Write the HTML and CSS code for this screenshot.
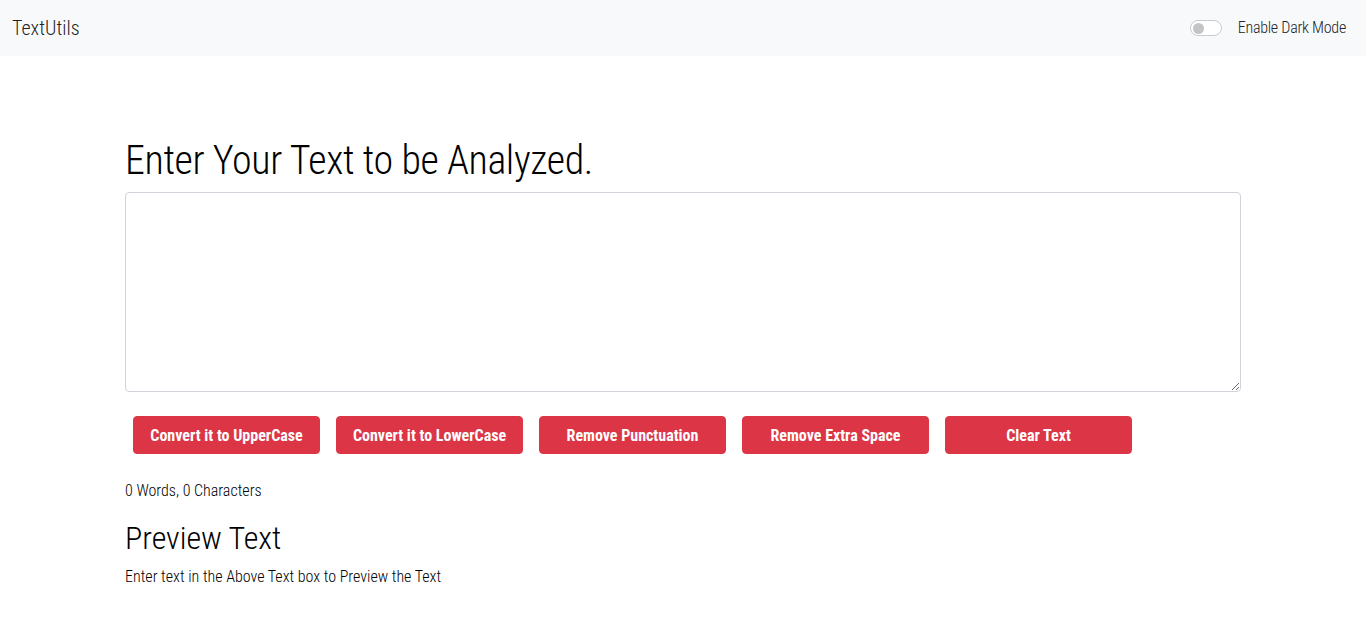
FILE: index.html
```html
<!DOCTYPE html>
<html lang="en">
<head>
<meta charset="utf-8">
<title>TextUtils</title>
<link rel="stylesheet" href="styles.css">
</head>
<body>
<nav class="navbar">
  <a class="brand" href="#">TextUtils</a>
  <label class="switch">
    <span class="switch-track"><span class="switch-knob"></span></span>
    <span class="switch-label">Enable Dark Mode</span>
  </label>
</nav>
<main class="container">
  <h1 class="title">Enter Your Text to be Analyzed.</h1>
  <textarea class="textbox" rows="8"></textarea>
  <div class="actions">
    <button class="btn">Convert it to UpperCase</button>
    <button class="btn">Convert it to LowerCase</button>
    <button class="btn">Remove Punctuation</button>
    <button class="btn">Remove Extra Space</button>
    <button class="btn">Clear Text</button>
  </div>
  <p class="summary">0 Words, 0 Characters</p>
  <h2 class="subtitle">Preview Text</h2>
  <p class="preview">Enter text in the Above Text box to Preview the Text</p>
</main>
</body>
</html>
```
FILE: styles.css
```css
* { box-sizing: border-box; }
body {
  margin: 0;
  font-family: "Roboto Condensed", Roboto, sans-serif;
  font-stretch: 75%;
  font-weight: 300;
  font-size: 16px;
  line-height: 1.5;
  color: #212529;
  background: #fff;
}
.navbar {
  height: 56px;
  background: #f8f9fa;
  display: flex;
  align-items: center;
  justify-content: space-between;
  padding: 0 20px 0 12px;
}
.brand {
  font-size: 20px;
  color: rgba(0,0,0,0.9);
  text-decoration: none;
}
.switch {
  display: flex;
  align-items: center;
  gap: 16px;
  font-size: 16px;
  color: #212529;
}
.switch-label {
  letter-spacing: -0.25px;
}
.switch-track {
  width: 32px;
  height: 16px;
  border: 1px solid #c8ccd0;
  border-radius: 8px;
  background: #fff;
  display: flex;
  align-items: center;
  padding-left: 2px;
}
.switch-knob {
  width: 11px;
  height: 11px;
  border-radius: 50%;
  background: #c4c4c4;
}
.container {
  width: 1116px;
  margin: 0 auto;
  padding-top: 81px;
}
.title {
  font-size: 40px;
  font-weight: 300;
  line-height: 1.2;
  letter-spacing: -0.4px;
  margin: 0 0 7px;
  color: #000;
}
.textbox {
  display: block;
  width: 100%;
  height: 200px;
  border: 1px solid #ced4da;
  border-radius: 4px;
  resize: vertical;
  font: inherit;
  padding: 6px 12px;
}
.actions {
  display: flex;
  gap: 16px;
  padding: 24px 8px 0;
}
.btn {
  width: 187px;
  height: 38px;
  background: #dc3545;
  border: 1px solid #dc3545;
  border-radius: 4px;
  color: #fff;
  font-family: inherit;
  font-stretch: 75%;
  font-size: 16px;
  font-weight: 700;
}
.summary {
  margin: 25px 0 16px;
  color: #000;
}
.subtitle {
  font-size: 32px;
  font-weight: 300;
  line-height: 1.2;
  margin: 0 0 8px;
  color: #000;
}
.preview {
  margin: 0;
  font-size: 16px;
  color: #000;
}
```
